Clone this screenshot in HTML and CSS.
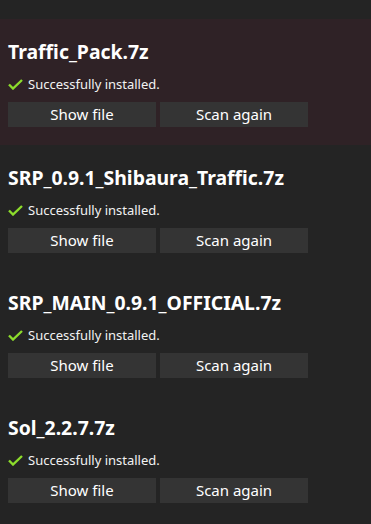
FILE: index.html
```html
<!doctype html>
<html lang="en">
  <head>
    <meta charset="UTF-8" />
    <meta name="viewport" content="width=device-width, initial-scale=1.0" />
    <title>Install results</title>
    <link rel="stylesheet" href="styles.css">
  </head>
  <body>
    <div class="results">
      <div class="item selected">
        <h2 class="name">Traffic_Pack.7z</h2>
        <div class="status">
          <svg class="check" viewBox="0 0 15 11" width="15" height="11"><path d="M1 5.5 L5 9.5 L14 1" /></svg>
          <span>Successfully installed.</span>
        </div>
        <div class="actions">
          <button class="btn">Show file</button>
          <button class="btn">Scan again</button>
        </div>
      </div>

      <div class="item">
        <h2 class="name">SRP_0.9.1_Shibaura_Traffic.7z</h2>
        <div class="status">
          <svg class="check" viewBox="0 0 15 11" width="15" height="11"><path d="M1 5.5 L5 9.5 L14 1" /></svg>
          <span>Successfully installed.</span>
        </div>
        <div class="actions">
          <button class="btn">Show file</button>
          <button class="btn">Scan again</button>
        </div>
      </div>

      <div class="item">
        <h2 class="name">SRP_MAIN_0.9.1_OFFICIAL.7z</h2>
        <div class="status">
          <svg class="check" viewBox="0 0 15 11" width="15" height="11"><path d="M1 5.5 L5 9.5 L14 1" /></svg>
          <span>Successfully installed.</span>
        </div>
        <div class="actions">
          <button class="btn">Show file</button>
          <button class="btn">Scan again</button>
        </div>
      </div>

      <div class="item">
        <h2 class="name">Sol_2.2.7.7z</h2>
        <div class="status">
          <svg class="check" viewBox="0 0 15 11" width="15" height="11"><path d="M1 5.5 L5 9.5 L14 1" /></svg>
          <span>Successfully installed.</span>
        </div>
        <div class="actions">
          <button class="btn">Show file</button>
          <button class="btn">Scan again</button>
        </div>
      </div>
    </div>
  </body>
</html>
```

FILE: styles.css
```css
* {
  margin: 0;
  padding: 0;
  box-sizing: border-box;
}

body {
  font-family: 'Noto Sans', 'Open Sans', sans-serif;
  background: #242424;
  color: #ffffff;
  height: 100vh;
  overflow: hidden;
}

.results {
  padding-top: 19px;
}

.item {
  height: 125px;
  padding: 19px 8px 0;
}

.item.selected {
  height: 126px;
  background: #2f2226;
}

.name {
  font-size: 19.4px;
  font-weight: 700;
  line-height: 28px;
}

.status {
  display: flex;
  align-items: center;
  gap: 5px;
  height: 20px;
  margin-top: 8px;
  font-size: 13px;
  color: #f2f2f2;
}

.check {
  flex: none;
}

.check path {
  fill: none;
  stroke: #8cdc2c;
  stroke-width: 2.4;
}

.actions {
  display: flex;
  gap: 4px;
  margin-top: 8px;
}

.btn {
  width: 148px;
  height: 25px;
  border: none;
  background: #343434;
  color: #ffffff;
  font-family: inherit;
  font-size: 15px;
  line-height: 25px;
}
```
